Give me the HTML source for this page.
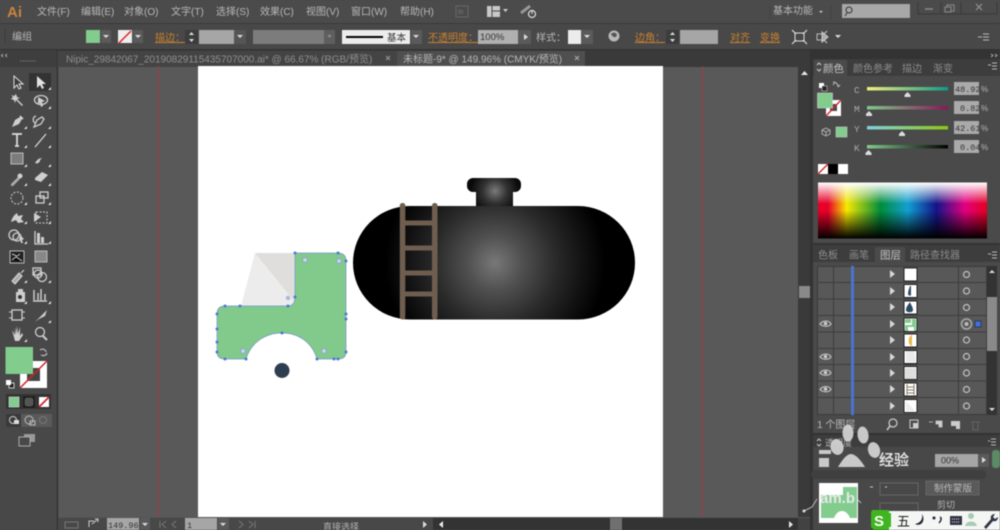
<!DOCTYPE html>
<html><head><meta charset="utf-8"><title>Illustrator</title>
<style>
html,body{margin:0;padding:0;width:1000px;height:530px;overflow:hidden;background:#484848}
svg{display:block;filter:blur(.4px)}
text{font-family:"Liberation Sans","Noto Sans CJK SC",sans-serif;font-size:10px;fill:#b4b4b4}
.m{font-size:10px;fill:#b8b8b8}
.o{fill:#c9812f;text-decoration:underline;font-size:10px}
.d{fill:#8c8c8c}
.i{fill:#cfcfcf;stroke:none}
.s{fill:none;stroke:#cfcfcf;stroke-width:1.3}
.v{font-family:"Liberation Mono","Noto Sans CJK SC",monospace;font-size:8.5px;fill:#333}
</style></head><body>
<svg width="1000" height="530" viewBox="0 0 1000 530" xmlns="http://www.w3.org/2000/svg">
<defs>
<radialGradient id="tank" gradientUnits="userSpaceOnUse" cx="495" cy="263" r="110">
<stop offset="0" stop-color="#787878"/><stop offset=".25" stop-color="#505050"/><stop offset=".55" stop-color="#2a2a2a"/><stop offset=".8" stop-color="#121212"/><stop offset="1" stop-color="#000"/></radialGradient>
<radialGradient id="cap" gradientUnits="userSpaceOnUse" cx="495" cy="191" r="24">
<stop offset="0" stop-color="#7a7a7a"/><stop offset=".5" stop-color="#333"/><stop offset="1" stop-color="#0a0a0a"/></radialGradient>
<linearGradient id="hue" x1="0" x2="1" y1="0" y2="0">
<stop offset="0" stop-color="#e8002a"/><stop offset=".06" stop-color="#e8002a"/><stop offset=".17" stop-color="#f5e900"/><stop offset=".37" stop-color="#008c3c"/><stop offset=".53" stop-color="#12a0d0"/><stop offset=".7" stop-color="#14148a"/><stop offset=".87" stop-color="#e4007f"/><stop offset="1" stop-color="#e60020"/></linearGradient>
<linearGradient id="vw" x1="0" x2="0" y1="0" y2="1">
<stop offset="0" stop-color="#fff"/><stop offset=".38" stop-color="#fff" stop-opacity="0"/><stop offset=".5" stop-color="#000" stop-opacity="0"/><stop offset="1" stop-color="#000"/></linearGradient>
<linearGradient id="c1" x1="0" x2="1"><stop offset="0" stop-color="#f2ee7a"/><stop offset="1" stop-color="#0f9a88"/></linearGradient>
<linearGradient id="c2" x1="0" x2="1"><stop offset="0" stop-color="#7fc98c"/><stop offset="1" stop-color="#8e1458"/></linearGradient>
<linearGradient id="c3" x1="0" x2="1"><stop offset="0" stop-color="#7fd0e0"/><stop offset="1" stop-color="#8cc80f"/></linearGradient>
<linearGradient id="c4" x1="0" x2="1"><stop offset="0" stop-color="#82cc8e"/><stop offset="1" stop-color="#000"/></linearGradient>
</defs>

<!-- menu bar -->
<rect x="0" y="0" width="1000" height="24" fill="#4b4b4b"/>
<text x="7" y="17" style="font-size:15px;font-weight:bold;fill:#c9843f">Ai</text>
<text class="m" x="37" y="15">文件(F)</text>
<text class="m" x="81" y="15">编辑(E)</text>
<text class="m" x="124" y="15">对象(O)</text>
<text class="m" x="171" y="15">文字(T)</text>
<text class="m" x="216" y="15">选择(S)</text>
<text class="m" x="260" y="15">效果(C)</text>
<text class="m" x="306" y="15">视图(V)</text>
<text class="m" x="351" y="15">窗口(W)</text>
<text class="m" x="400" y="15">帮助(H)</text>
<rect x="456" y="6" width="12" height="11" fill="none" stroke="#666"/>
<text x="458" y="14" style="font-size:6px;fill:#777">Br</text>
<rect x="487" y="6" width="13" height="11" fill="#c8c8c8"/><path d="M492 6v11M492 11h8" stroke="#4b4b4b"/>
<path d="M503 9h5l-2.500 3z" fill="#ccc"/>
<path d="M521 13l9-7" stroke="#999" stroke-width="3"/><circle cx="532" cy="14" r="3.500" fill="none" stroke="#ddd" stroke-width="1.200"/><path d="M532 10v4" stroke="#ddd"/>
<path d="M770 5v14M831 5v14" stroke="#424242"/>
<text class="m" x="773" y="14">基本功能</text>
<path d="M819 11h4l-2 2z" fill="#ccc"/>
<rect x="842" y="4" width="68" height="14" fill="#a8a8a8"/>
<circle cx="849" cy="10" r="3" fill="none" stroke="#333"/><path d="M847 13l-2 3" stroke="#333"/>
<path d="M918 2v12h79V2" fill="none" stroke="#3a3a3a"/><path d="M941 2v12M961 2v12" stroke="#3a3a3a"/>
<path d="M925 9h8" stroke="#8a8a8a" stroke-width="1.500"/>
<rect x="947" y="5" width="7" height="6" fill="none" stroke="#8a8a8a"/><rect x="945" y="7" width="6" height="5" fill="#4b4b4b" stroke="#8a8a8a"/>
<path d="M976 4l6 6M982 4l-6 6" stroke="#8a8a8a" stroke-width="1.300"/>

<!-- control bar -->
<rect x="0" y="24" width="1000" height="26" fill="#484848"/>
<path d="M0 23.500h1000" stroke="#3a3a3a"/>
<path d="M5 29v14" stroke="#3a3a3a"/>
<text class="m" x="12" y="40">编组</text>
<rect x="86" y="30" width="14" height="13" fill="#82cc8e"/>
<rect x="101" y="30" width="10" height="13" fill="#5a5a5a"/><path d="M103 35h6l-3 3z" fill="#ddd"/>
<rect x="118" y="30" width="14" height="13" fill="#eee"/><path d="M119 43l12-12" stroke="#d22" stroke-width="1.500"/>
<rect x="133" y="30" width="10" height="13" fill="#5a5a5a"/><path d="M135 35h6l-3 3z" fill="#ddd"/>
<text class="o" x="155" y="41">描边：</text>
<rect x="185" y="30" width="13" height="14" fill="#3c3c3c"/><path d="M189 35l2.500-3 2.500 3zM189 39l2.500 3 2.500-3z" fill="#ddd"/>
<rect x="199" y="30" width="35" height="14" fill="#a6a6a6"/>
<rect x="234" y="30" width="12" height="14" fill="#555"/><path d="M237 35h6l-3 3z" fill="#ddd"/>
<rect x="253" y="30" width="71" height="14" fill="#7c7c7c"/>
<rect x="324" y="30" width="11" height="14" fill="#5e5e5e"/><path d="M327 35h5l-2.500 3z" fill="#888"/>
<rect x="342" y="30" width="68" height="14" fill="#ececec"/><path d="M346 37h37" stroke="#000" stroke-width="2"/>
<text x="387" y="41" style="fill:#333;font-size:9.500px">基本</text>
<rect x="411" y="30" width="11" height="14" fill="#5a5a5a"/><path d="M413 35h6l-3 3z" fill="#ddd"/>
<text class="o" x="428" y="41">不透明度：</text>
<rect x="478" y="30" width="40" height="14" fill="#b0b0b0"/><text x="480" y="40" style="fill:#333;font-size:9.500px">100%</text>
<rect x="518" y="30" width="13" height="14" fill="#5a5a5a"/><path d="M524 34l4 3-4 3z" fill="#ddd"/>
<text class="m" x="536" y="41">样式：</text>
<rect x="568" y="30" width="13" height="14" fill="#ececec"/>
<rect x="581" y="30" width="12" height="14" fill="#5a5a5a"/><path d="M584 35h6l-3 3z" fill="#ddd"/>
<circle cx="614" cy="36" r="5.500" fill="#b8b8b8"/><path d="M611 34c2-2 5-2 6 1-1 3-4 3-6-1z" fill="#555"/>
<text class="o" x="635" y="41">边角：</text>
<rect x="666" y="30" width="13" height="14" fill="#3c3c3c"/><path d="M670 35l2.500-3 2.500 3zM670 39l2.500 3 2.500-3z" fill="#ddd"/>
<rect x="680" y="30" width="38" height="14" fill="#a6a6a6"/>
<text class="o" x="730" y="41">对齐</text>
<text class="o" x="760" y="41">变换</text>
<rect x="795" y="33" width="9" height="8" fill="none" stroke="#ddd"/><path d="M792 30l4 4M807 30l-4 4M792 44l4-4M807 44l-4-4" stroke="#ddd" stroke-width="1.200"/>
<rect x="817" y="34" width="7" height="6" fill="none" stroke="#bbb"/><path d="M822 32l6 5-6 5zM827 31l-3 3M827 43l-3-3" stroke="#ccc" fill="#aaa"/>
<path d="M835 35h6l-3 3z" fill="#ddd"/>
<path d="M978 37h4M983 34h6M983 37h6M983 40h6" stroke="#bbb"/>

<!-- tab row -->
<rect x="0" y="50" width="1000" height="17" fill="#3a3a3a"/>
<path d="M0 49.500h1000" stroke="#323232"/>
<rect x="58" y="51" width="339" height="16" fill="#444"/>
<text x="66" y="62.500" style="fill:#8f8f8f;font-size:10px">Nipic_29842067_20190829115435707000.ai* @ 66.67% (RGB/预览)</text>
<path d="M386 56l4 4M390 56l-4 4" stroke="#999"/>
<rect x="397" y="51" width="188" height="16" fill="#4f4f4f"/>
<text x="403" y="62.500" style="fill:#b8b8b8;font-size:10px">未标题-9* @ 149.96% (CMYK/预览)</text>
<path d="M575 56l4 4M579 56l-4 4" stroke="#aaa"/>

<!-- canvas -->
<rect x="58" y="67" width="740" height="450" fill="#595959"/>
<rect x="198" y="66" width="465" height="451" fill="#fff"/>
<path d="M158.500 66v451M702.500 66v451" stroke="#a13b42"/>

<!-- tank -->
<path d="M467 184a6 6 0 0 1 6-6h42a6 6 0 0 1 6 6v2a6 6 0 0 1-6 6h-2v14h-37v-14h-3a6 6 0 0 1-6-6z" fill="url(#cap)"/>
<rect x="353" y="206" width="282" height="113.500" rx="57" ry="57" fill="url(#tank)"/>
<g fill="#6f5e4f">
<rect x="399.800" y="203" width="5.500" height="116.500" rx="2.500"/>
<rect x="432" y="203" width="5.500" height="116.500" rx="2.500"/>
<rect x="405" y="220.500" width="27" height="5"/>
<rect x="405" y="245.500" width="27" height="5"/>
<rect x="405" y="270.500" width="27" height="5"/>
<rect x="405" y="291.500" width="27" height="5"/>
</g>

<!-- tractor cab -->
<path d="M255 253L295 253V297Q295 306 288 306H241Z" fill="#ececec"/>
<path d="M255 253H295V302Z" fill="#dfdedc"/>
<path d="M295 253H338Q346 253 346 261V352Q346 359 338 359H317C312 342 298 333 282 333C266 333 251 342 246 359H225Q217 359 217 352V314Q217 306 225 306H288Q295 306 295 297Z" fill="#82c98c" stroke="#7096c8" stroke-width=".7"/>
<circle cx="282" cy="370.500" r="7.500" fill="#2c3e50"/>
<g fill="#4f79d0">
<circle cx="295" cy="253" r="1.500"/><circle cx="338" cy="253" r="1.500"/><circle cx="346" cy="261" r="1.500"/><circle cx="346" cy="314" r="1.500"/><circle cx="346" cy="319" r="1.500"/><circle cx="346" cy="352" r="1.500"/><circle cx="338" cy="359" r="1.500"/><circle cx="334" cy="359" r="1.500"/><circle cx="317" cy="359" r="1.500"/><circle cx="282" cy="333" r="1.500"/><circle cx="246" cy="359" r="1.500"/><circle cx="225" cy="359" r="1.500"/><circle cx="217" cy="352" r="1.500"/><circle cx="217" cy="342" r="1.500"/><circle cx="217" cy="329" r="1.500"/><circle cx="217" cy="314" r="1.500"/><circle cx="225" cy="306" r="1.500"/><circle cx="240" cy="306" r="1.500"/><circle cx="288" cy="306" r="1.500"/><circle cx="295" cy="297" r="1.500"/>
</g>
<g fill="#cfd9ee" stroke="#8aa4d8" stroke-width=".8">
<rect x="303" y="258" width="4" height="4"/><rect x="337" y="259" width="4" height="4"/><rect x="241" y="349" width="4" height="4"/><rect x="322" y="349" width="4" height="4"/>
</g>
<circle cx="288" cy="298" r="2.200" fill="#a8b8e4"/>

<!-- left toolbar -->
<rect x="0" y="67" width="58" height="463" fill="#484848"/>
<path d="M57.500 67v463" stroke="#333" stroke-width="1.500"/>
<rect x="0" y="50" width="56" height="17" fill="#3e3e3e"/>
<path d="M3 54l-1.500 1.500 1.500 1.500M7 54l-1.500 1.500 1.500 1.500" stroke="#aaa" fill="none"/>
<path d="M20 61h16" stroke="#777" stroke-dasharray="1.500 1"/>
<rect x="29" y="73" width="22" height="18" fill="#333"/>
<g>
<path d="M14 76v12l3-3 2 4 2-1-2-4h4z" fill="#3a3a3a" stroke="#ddd"/>
<path d="M37 76v12l3-3 2 4 2-1-2-4h4z" fill="#e2e2e2"/>
<path d="M11 95l3 1 2-2 1 3 3 1-3 1 6 6-1 1-6-6-1 3-1-3-3-1 2-2z" class="i"/>
<ellipse cx="41" cy="100" rx="6.500" ry="4.500" class="s"/><path d="M38 97l7 4-3 1 1 4-2 1-1-4-2 1z" class="i"/>
<path d="M12 127l3-7 5-3 2 2-3 5-7 3zM15 123l2-2" class="i"/><path d="M20 116l3 3" stroke="#ddd" stroke-width="1.500"/>
<path d="M34 127l3-7 5-3 2 2-3 5-7 3z" class="s"/><path d="M36 116c-4 1-3 6-1 7" class="s"/>
<path d="M12 134h10M17 134v12M15 146h4" stroke="#ddd" stroke-width="1.700" fill="none"/>
<path d="M35 147l11-13" stroke="#ddd" stroke-width="1.200"/>
<rect x="11" y="153" width="12" height="11" fill="#7c7c7c" stroke="#bbb"/>
<path d="M35 163c2 1 5 0 5-3l7-7-5 5c-3 0-5 2-7 5z" class="i"/>
<path d="M11 184l7-7 2 2-7 7h-2z" fill="#aaa"/><circle cx="20" cy="176" r="2.500" class="i"/>
<path d="M35 178l7-6 6 3-7 7-6-2z" class="i"/>
<circle cx="17" cy="198" r="6" fill="none" stroke="#ccc" stroke-dasharray="2 1.500"/>
<rect x="36" y="196" width="8" height="7" class="s"/><rect x="40" y="192" width="8" height="6" class="s"/>
<path d="M11 222c1-4 3-7 6-9l1 3 5-1-2 4 3 3-6 1-2-3z" class="i"/>
<rect x="36" y="212" width="11" height="11" fill="none" stroke="#ccc" stroke-dasharray="2 1.500"/><path d="M34 213l7 4-7 5z" class="i"/>
<circle cx="14" cy="235" r="5" class="s"/><circle cx="17" cy="237" r="4" class="s"/><path d="M20 235l4 4-2 1 1 3-2 0-1-3-1 1z" class="i"/>
<path d="M35 231v13h13" class="s"/><path d="M37 233h3v10h-3zM41 237h3v6h-3z" class="i"/>
<rect x="10" y="251" width="14" height="12" fill="#222" stroke="#bbb"/><path d="M12 254l5 2 3-2M12 260l4-3 6 4" stroke="#ccc"/>
<rect x="35" y="251" width="12" height="11" fill="#888" stroke="#bbb"/>
<path d="M12 281l7-8 3 3-7 8zM21 273l3-3" stroke="#ddd" fill="#aaa"/>
<rect x="33" y="268" width="8" height="7" class="s"/><circle cx="42" cy="277" r="4.500" class="s"/><circle cx="38" cy="274" r="4" class="s"/>
<rect x="16" y="292" width="9" height="10" class="i"/><circle cx="20" cy="297" r="2" fill="#333"/><rect x="18" y="289" width="5" height="3" class="i"/>
<path d="M34 300v-10M38 300v-7M41 300v-11M45 300v-6M33 301h14" stroke="#ccc" stroke-width="1.500"/>
<rect x="12" y="310" width="10" height="10" class="s"/><path d="M9 312h3M22 312h3M9 318h3M22 318h3" stroke="#ccc"/>
<path d="M35 322l12-12-2 6-6 3z" class="i"/>
<path d="M12 330l3 5v-8l1 7 1-8 1 8 2-7v9l2-3 1 2-4 6h-4z" class="i"/>
<circle cx="40" cy="332" r="4.500" class="s"/><path d="M43 336l4 4" stroke="#ccc" stroke-width="2"/>
</g>
<g fill="#ddd">
<path d="M51 90h-3l3-3z"/><path d="M51 109h-3l3-3z"/><path d="M27 129h-3l3-3z"/><path d="M51 129h-3l3-3z"/><path d="M27 148h-3l3-3z"/><path d="M51 148h-3l3-3z"/><path d="M27 167h-3l3-3z"/><path d="M51 167h-3l3-3z"/><path d="M27 186h-3l3-3z"/><path d="M51 186h-3l3-3z"/><path d="M27 205h-3l3-3z"/><path d="M51 205h-3l3-3z"/><path d="M27 224h-3l3-3z"/><path d="M51 224h-3l3-3z"/><path d="M27 244h-3l3-3z"/><path d="M51 244h-3l3-3z"/><path d="M27 283h-3l3-3z"/><path d="M51 283h-3l3-3z"/><path d="M27 304h-3l3-3z"/><path d="M51 304h-3l3-3z"/><path d="M27 342h-3l3-3z"/><path d="M51 323h-3l3-3z"/>
</g>
<!-- fill / stroke -->
<rect x="20" y="361" width="27" height="27" fill="#fff"/>
<rect x="27" y="368" width="13" height="13" fill="#444"/>
<path d="M20 388l27-27" stroke="#d2232a" stroke-width="1.500"/>
<rect x="5.500" y="347" width="27.500" height="27" fill="#82cc8e"/>
<path d="M40 350c3-2 6 0 6 2M47 353c-1 3-4 3-6 2" stroke="#bbb" fill="none" stroke-width="1.200"/>
<rect x="9" y="383" width="5" height="5" fill="#222" stroke="#ccc"/><rect x="6" y="380" width="5" height="5" fill="#fff"/>
<rect x="6" y="394" width="45" height="15" fill="#333"/>
<rect x="9" y="397" width="10" height="10" fill="#82cc8e" stroke="#ddd" stroke-width=".6"/>
<circle cx="29" cy="402" r="5" fill="#555"/><rect x="24" y="397" width="10" height="10" fill="none" stroke="#111"/>
<rect x="39" y="397" width="10" height="10" fill="#fff"/><path d="M39 407l10-10" stroke="#d2232a" stroke-width="1.700"/>
<rect x="6" y="414" width="46" height="13" fill="#5a5a5a"/><rect x="6" y="414" width="15" height="13" fill="#3a3a3a"/>
<circle cx="13" cy="420" r="3.500" fill="none" stroke="#ccc"/><rect x="14" y="420" width="5" height="4" fill="#ddd"/>
<circle cx="29" cy="420" r="4" fill="none" stroke="#bbb"/><rect x="30" y="421" width="5" height="4" fill="none" stroke="#bbb"/>
<circle cx="43" cy="420" r="3.500" fill="none" stroke="#777"/>
<rect x="24" y="434" width="11" height="8" fill="#999"/><rect x="19" y="437" width="11" height="9" fill="#484848" stroke="#aaa"/>

<!-- bottom status -->
<rect x="58" y="517" width="752" height="13" fill="#484848"/>
<path d="M58 517.500h752" stroke="#555"/>
<rect x="65" y="522" width="13" height="6" fill="none" stroke="#777"/>
<path d="M89 527v-6h5M92 524l5-4M95 519h3v3" stroke="#ccc" fill="none"/>
<rect x="107" y="518" width="32" height="12" fill="#a6a6a6"/><text class="v" x="108" y="528">149.96</text>
<rect x="140" y="518" width="10" height="12" fill="#5a5a5a"/><path d="M142 523h6l-3 3z" fill="#ddd"/>
<path d="M160 521v7M166 521l-4 3.500 4 3.500M176 521l-4 3.500 4 3.500" stroke="#777" fill="none"/>
<rect x="185" y="518" width="32" height="12" fill="#a6a6a6"/><text class="v" x="187" y="528">1</text>
<rect x="218" y="518" width="11" height="12" fill="#5a5a5a"/><path d="M220 523h6l-3 3z" fill="#ddd"/>
<path d="M239 521l4 3.500-4 3.500M249 521l4 3.500-4 3.500M255 521v7" stroke="#777" fill="none"/>
<text x="323" y="530" style="font-size:9px">直接选择</text>
<path d="M423 521l4 3.500-4 3.500z" fill="#ddd"/>
<rect x="433" y="518" width="365" height="12" fill="#333"/>
<path d="M443 521l-4 3.500 4 3.500z" fill="#eee"/>
<rect x="610" y="518" width="12" height="12" fill="#707070"/>
<path d="M789 521l4 3.500-4 3.500z" fill="#e8e8e8"/>
<!-- right canvas scrollbar -->
<rect x="798" y="66" width="12" height="451" fill="#3a3a3a"/>
<path d="M801 75l3.500-4 3.500 4z" fill="#e8e8e8"/>
<rect x="799" y="286" width="11" height="12" fill="#8a8a8a"/>
<rect x="798" y="518" width="12" height="12" fill="#424242"/>

<!-- right panels -->
<rect x="810" y="50" width="190" height="480" fill="#333"/>
<path d="M991 54l2 1.500-2 1.500M995 54l2 1.500-2 1.500" stroke="#aaa" fill="none"/>
<!-- color panel -->
<rect x="813" y="59" width="187" height="184" fill="#4a4a4a"/>
<rect x="813" y="59" width="187" height="17" fill="#3d3d3d"/>
<rect x="814" y="60" width="33" height="16" fill="#4a4a4a"/>
<path d="M817 65l2-2 2 2M817 69l2 2 2-2" stroke="#ccc" fill="none"/>
<text x="823" y="72" style="font-size:10.500px;fill:#c4c4c4">颜色</text>
<text class="d" x="853" y="72" style="font-size:10px">颜色参考</text>
<text class="d" x="902" y="72">描边</text>
<text class="d" x="933" y="72">渐变</text>
<path d="M988 65h3M992 63h5M992 66h5M992 69h5" stroke="#bbb"/>
<rect x="819" y="83" width="5" height="5" fill="#fff"/><rect x="822" y="86" width="5" height="5" fill="#222" stroke="#ccc" stroke-width=".6"/>
<path d="M833 82c3 0 5 2 5 5M833 85l2-3M840 85l-2 2" stroke="#bbb" fill="none"/>
<rect x="826" y="100" width="15" height="16" fill="#fff"/><rect x="830" y="104" width="7" height="7" fill="#4a4a4a"/>
<path d="M826 116l15-16" stroke="#d2232a" stroke-width="1.300"/>
<rect x="817.500" y="93" width="15" height="15" fill="#82cc8e" stroke="#ccc" stroke-width=".6"/>
<path d="M822 130l4-2 4 2v4l-4 2-4-2z" fill="none" stroke="#aaa"/><path d="M822 130l4 2 4-2M826 132v4" stroke="#aaa" fill="none"/>
<rect x="836" y="127" width="11" height="10" fill="#82cc8e" stroke="#ccc" stroke-width=".6"/>
<text x="854" y="93" style="font-family:'Liberation Mono',monospace;font-size:9.500px;fill:#aaa">C</text>
<text x="854" y="112" style="font-family:'Liberation Mono',monospace;font-size:9.500px;fill:#aaa">M</text>
<text x="854" y="132" style="font-family:'Liberation Mono',monospace;font-size:9.500px;fill:#aaa">Y</text>
<text x="854" y="151" style="font-family:'Liberation Mono',monospace;font-size:9.500px;fill:#aaa">K</text>
<rect x="867" y="87" width="81" height="3.500" fill="url(#c1)"/>
<rect x="867" y="106" width="81" height="3.500" fill="url(#c2)"/>
<rect x="867" y="126" width="81" height="3.500" fill="url(#c3)"/>
<rect x="867" y="145" width="81" height="3.500" fill="url(#c4)"/>
<path d="M904.500 95l3-3 3 3v2h-6zM866 114l3-3 3 3v2h-6zM899 134l3-3 3 3v2h-6zM865.500 153l3-3 3 3v2h-6z" fill="#ddd"/>
<g fill="#aaa"><rect x="954" y="82" width="25" height="13"/><rect x="954" y="101" width="25" height="13"/><rect x="954" y="121" width="25" height="13"/><rect x="954" y="140" width="25" height="13"/></g>
<text class="v" x="955" y="92">48.92</text><text class="v" x="960" y="111">0.82</text><text class="v" x="955" y="131">42.61</text><text class="v" x="960" y="150">0.04</text>
<text x="981" y="92" style="font-size:8px">%</text><text x="981" y="111" style="font-size:8px">%</text><text x="981" y="131" style="font-size:8px">%</text><text x="981" y="150" style="font-size:8px">%</text>
<rect x="818" y="164" width="10" height="10" fill="#fff"/><path d="M818 174l10-10" stroke="#d2232a" stroke-width="1.300"/>
<rect x="828" y="164" width="10" height="10" fill="#000"/><rect x="838" y="164" width="10" height="10" fill="#fff"/>
<rect x="818" y="182.500" width="169" height="56" fill="url(#hue)"/>
<rect x="818" y="182.500" width="169" height="56" fill="url(#vw)"/>
<!-- layers panel -->
<rect x="813" y="245" width="187" height="188" fill="#4a4a4a"/>
<rect x="813" y="245" width="187" height="17" fill="#3d3d3d"/>
<rect x="875" y="247" width="30" height="15" fill="#4a4a4a"/>
<text class="d" x="818" y="258.500" style="font-size:10px">色板</text>
<text class="d" x="849" y="258.500" style="font-size:10px">画笔</text>
<text x="880" y="258.500" style="font-size:10.500px;fill:#c4c4c4">图层</text>
<text class="d" x="910" y="258.500">路径查找器</text>
<path d="M988 254h3M992 252h5M992 255h5M992 258h5" stroke="#bbb"/>
<rect x="817" y="266" width="170" height="149" fill="#585858"/>
<g stroke="#3c3c3c" stroke-width="1">
<path d="M817 266.500h170M817 282.500h170M817 299h170M817 315.500h170M817 332h170M817 348.500h170M817 364.500h170M817 381h170M817 397.500h170M817 414.500h170"/>
<path d="M817.500 266v149M833.500 266v149M958.500 266v149M986.500 266v149"/>
</g>
<rect x="851" y="266" width="3" height="149" fill="#4a74d0"/>
<g fill="#d8d8d8"><path d="M890 270l5 4-5 4z"/><path d="M890 287l5 4-5 4z"/><path d="M890 303l5 4-5 4z"/><path d="M890 320l5 4-5 4z"/><path d="M890 336l5 4-5 4z"/><path d="M890 353l5 4-5 4z"/><path d="M890 369l5 4-5 4z"/><path d="M890 385l5 4-5 4z"/><path d="M890 402l5 4-5 4z"/></g>
<g fill="#fff" stroke="#222" stroke-width="1">
<rect x="904" y="268" width="13" height="13"/><rect x="904" y="284.500" width="13" height="13"/><rect x="904" y="301" width="13" height="13"/><rect x="904" y="318" width="13" height="13"/><rect x="904" y="334" width="13" height="13"/><rect x="904" y="350.500" width="13" height="13"/><rect x="904" y="366.500" width="13" height="13"/><rect x="904" y="383" width="13" height="13"/><rect x="904" y="399.500" width="13" height="13"/>
</g>
<path d="M910 286c-1 3-2 5-2 8 0 2 3 2 3 1l0-9z" fill="#2c4a66"/>
<path d="M910 302c-2 3-4 5-4 8 0 3 7 3 7 0 0-3-2-5-3-8z" fill="#2c4a66"/>
<path d="M905 319h11v12h-11z" fill="#82cc8e"/><path d="M905 325h7v-6h-1v4h-6z" fill="#fff"/><path d="M908 327h6v4h-6z" fill="#fff"/>
<path d="M912 335c-4 1-5 10 0 11z" fill="#edb64a"/>
<path d="M906 351h8l2 11h-10z" fill="#e9e9e9"/><rect x="905" y="368" width="11" height="11" fill="#dfdedc"/>
<path d="M907 384v11M914 384v11M907 387h7M907 390h7M907 393h7" stroke="#8a7a68" fill="none"/>
<path d="M906 401l9 10h-9z" fill="#ececec"/>
<g fill="none" stroke="#ccc" stroke-width="1.100">
<path d="M820 324c3-4 9-4 11 0-2 3-8 3-11 0z"/><path d="M820 357c3-4 9-4 11 0-2 3-8 3-11 0z"/><path d="M820 373c3-4 9-4 11 0-2 3-8 3-11 0z"/><path d="M820 389.500c3-4 9-4 11 0-2 3-8 3-11 0z"/>
</g>
<g fill="#ccc"><circle cx="825.500" cy="323.500" r="1.800"/><circle cx="825.500" cy="356.500" r="1.800"/><circle cx="825.500" cy="372.500" r="1.800"/><circle cx="825.500" cy="389" r="1.800"/></g>
<g fill="none" stroke="#c4c4c4" stroke-width="1.200">
<circle cx="966.500" cy="274.500" r="3"/><circle cx="966.500" cy="291" r="3"/><circle cx="966.500" cy="307.500" r="3"/><circle cx="966.500" cy="340" r="3"/><circle cx="966.500" cy="356.500" r="3"/><circle cx="966.500" cy="373" r="3"/><circle cx="966.500" cy="389.500" r="3"/><circle cx="966.500" cy="406" r="3"/>
</g>
<circle cx="966.500" cy="324" r="5" fill="none" stroke="#aaa" stroke-width="1.500"/><circle cx="966.500" cy="324" r="2" fill="#bbb"/>
<rect x="975" y="321" width="6" height="6" fill="#3f6fe0" stroke="#222" stroke-width=".6"/>
<rect x="987" y="266" width="10" height="149" fill="#333"/>
<rect x="987" y="297" width="10" height="54" fill="#8a8a8a"/>
<path d="M989 273l3-3 3 3zM989 408l3 3 3-3z" fill="#ddd"/>
<text x="817" y="428" style="font-size:10px;fill:#bbb">1 个图层</text>
<circle cx="893" cy="423" r="4" fill="none" stroke="#ccc" stroke-width="1.200"/><path d="M890 426l-3 4" stroke="#ccc" stroke-width="1.500"/>
<rect x="910" y="420" width="8" height="8" fill="none" stroke="#ccc"/><rect x="913" y="423" width="5" height="5" fill="#ccc"/>
<path d="M929 422h4M936 421h6v6h-3v-3h-3z" stroke="#ccc" fill="#ccc" stroke-width=".8"/>
<path d="M951 421h9v8h-4v-3h-5z" fill="#ccc"/>
<path d="M971 422h9M973 423v7h5v-7" stroke="#666" fill="none"/>

<!-- bottom panel -->
<rect x="813" y="435" width="187" height="95" fill="#484848"/>
<rect x="813" y="435" width="187" height="12" fill="#3d3d3d"/>
<path d="M817 441l2-2 2 2M817 444l2 2 2-2" stroke="#ccc" fill="none"/>
<text x="825" y="446" style="font-size:9px">透明度</text>
<path d="M988 441h2M991 439h5M991 442h5M991 445h5" stroke="#bbb"/>
<rect x="935" y="454" width="43" height="13" fill="#a6a6a6"/><text x="941" y="463.500" style="fill:#333;font-size:9px">00%</text>
<rect x="978" y="454" width="11" height="13" fill="#5a5a5a"/><path d="M982 457l4 3-4 3z" fill="#ddd"/>
<rect x="992" y="450" width="8" height="18" rx="3" fill="#5c8a64"/>
<rect x="811" y="470" width="175" height="9" rx="4" fill="#3f3f3f"/>
<rect x="819" y="483" width="39" height="40" fill="#fff"/>
<path d="M821 495h22v-8h14v31h-7c-2-5-5-7-8-7s-6 2-8 7h-13z" fill="#82cc8e"/>
<rect x="880" y="483" width="38" height="12" fill="none" stroke="#666"/>
<rect x="880" y="503" width="38" height="12" fill="none" stroke="#666"/>
<path d="M870 487h3M885 487h2" stroke="#ccc"/>
<rect x="926" y="481" width="53" height="14" fill="#5a5a5a" stroke="#666"/>
<text x="934" y="491.500" style="font-size:9.500px;fill:#bbb">制作蒙版</text>
<text x="937" y="508" style="font-size:9px">剪切</text>
<path d="M804 511l8-4 5-8" stroke="#bbb" fill="none"/><circle cx="804" cy="511" r="1.500" fill="#ddd"/>
<path d="M858 500l3 3" stroke="#bbb"/>

<!-- watermark -->
<g fill="#d4d4d4" opacity=".92">
<ellipse cx="848" cy="433" rx="5.500" ry="8.500"/>
<ellipse cx="863" cy="435" rx="5.500" ry="8.500" transform="rotate(-8 863 435)"/>
<ellipse cx="837" cy="447" rx="6.500" ry="8" transform="rotate(-15 837 447)"/>
<ellipse cx="874" cy="450" rx="6" ry="8" transform="rotate(-15 874 450)"/>
<path d="M838 467c3-5 8-13 13-13s11 8 14 13z"/>
<rect x="819" y="450" width="12" height="4"/><rect x="819" y="458" width="10" height="9"/>
</g>
<text x="879" y="465" style="font-size:15px;font-weight:bold;fill:#dcdcdc">经验</text>
<text x="820" y="503" style="font-size:15px;font-weight:bold;fill:#e8e8e8">am.b</text>

<!-- sogou IME -->
<rect x="885" y="511" width="115" height="19" fill="#f4f6f4"/>
<path d="M872 510h17v3h2v14h-2v3h-15l-3-3v-14z" fill="#3fb51f"/>
<text x="874" y="526" style="font-size:15px;font-weight:bold;fill:#fff">S</text>
<text x="897" y="526" style="font-size:13px;fill:#222">五</text>
<path d="M922 514c1 6-2 9-7 10 6 3 11-3 7-10z" fill="#223"/>
<circle cx="934" cy="518" r="1.500" fill="#223"/><path d="M940 517c2 1 1 4-1 6" stroke="#223" stroke-width="1.500" fill="none"/>
<rect x="950" y="516" width="12" height="9" fill="#334"/><path d="M952 519h8M952 522h8" stroke="#eee" stroke-dasharray="1 1"/>
<circle cx="971" cy="516" r="3" fill="#a8cbb4"/><path d="M965 526c1-6 11-6 12 0z" fill="#a8cbb4"/>
<path d="M984 527l7-8c-1-3 1-5 4-5l-2 3 2 2 3-2c0 3-2 5-5 4l-7 8z" fill="#334"/>
</svg>
</body></html>
